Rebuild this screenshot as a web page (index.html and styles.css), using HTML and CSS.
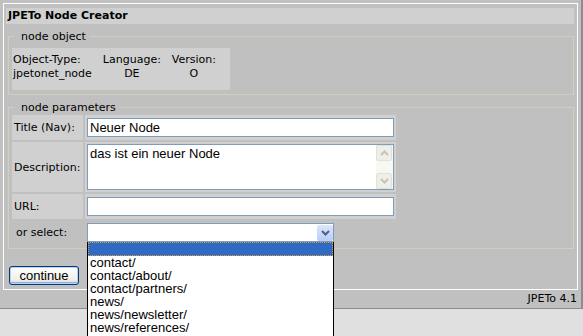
FILE: index.html
```html
<!DOCTYPE html>
<html lang="en">
<head>
    <meta charset="UTF-8">
    <title>JPETo Node Creator</title>
    <link rel="stylesheet" href="styles.css">
</head>
<body>

<div class="page">
    <div class="frame">
        <div class="titlebar">JPETo Node Creator</div>

        <fieldset class="group group-object">
            <legend>node object</legend>
            <div class="object-box">
                <table class="object-info">
                    <tr><td>Object-Type:</td><td class="center">Language:</td><td class="center">Version:</td></tr>
                    <tr><td>jpetonet_node</td><td class="center">DE</td><td class="center">O</td></tr>
                </table>
            </div>
        </fieldset>

        <fieldset class="group group-params">
            <legend>node parameters</legend>
            <div class="params">
                <div class="label">Title (Nav):</div>
                <div class="field"><input class="text" type="text" value="Neuer Node"></div>

                <div class="label">Description:</div>
                <div class="field field-area">
                    <div class="textbox">
                        <textarea>das ist ein neuer Node</textarea>
                        <div class="scrollbar">
                            <span class="sb-btn">
                                <svg width="9" height="6" viewBox="0 0 9 6"><path d="M1 5 L4.5 1.5 L8 5" fill="none" stroke="#c4c4bb" stroke-width="2"/></svg>
                            </span>
                            <span class="sb-btn">
                                <svg width="9" height="6" viewBox="0 0 9 6"><path d="M1 1 L4.5 4.5 L8 1" fill="none" stroke="#c4c4bb" stroke-width="2"/></svg>
                            </span>
                        </div>
                    </div>
                </div>

                <div class="label">URL:</div>
                <div class="field"><input class="text" type="text" value=""></div>

                <div class="label plain">or select:</div>
                <div class="field plain">
                    <div class="select">
                        <span class="select-value"></span>
                        <span class="select-arrow">
                            <svg width="9" height="6" viewBox="0 0 9 6"><path d="M1 1 L4.5 4.5 L8 1" fill="none" stroke="#4d6185" stroke-width="2"/></svg>
                        </span>
                        <ul class="dropdown">
                            <li class="selected"></li>
                            <li>contact/</li>
                            <li>contact/about/</li>
                            <li>contact/partners/</li>
                            <li>news/</li>
                            <li>news/newsletter/</li>
                            <li>news/references/</li>
                        </ul>
                    </div>
                </div>
            </div>
        </fieldset>

        <button class="continue" type="button">continue</button>
    </div>
    <div class="footer">JPETo 4.1</div>
</div>

</body>
</html>
```

FILE: styles.css
```css
html {
    background: #e0e0e0;
}
body {
    margin: 0;
    min-height: 336px;
    font-family: 'DejaVu Sans', Verdana, sans-serif;
    font-size: 11px;
    color: #000;
}
.page {
    background: #c0c0c0;
    border-right: 2px solid #8c8c8c;
    border-bottom: 1px solid #8c8c8c;
    padding: 3px 3px 0 3px;
}
.frame {
    border: 1px solid #fff;
    padding: 4px 3px 4px 2px;
}
.titlebar {
    background: #d0d0d0;
    height: 16px;
    line-height: 16px;
    padding-left: 2px;
    font-weight: bold;
}
.group {
    margin: 6px 0 0 2px;
    border: 1px solid #d0d0bf;
    padding: 1px 3px 4px 3px;
    min-width: 0;
}
.group legend {
    margin-left: 2px;
    padding: 0 4px 0 7px;
    line-height: 13px;
}
.group-object {
    padding-top: 5px;
}
.object-box {
    display: table;
    background: #d0d0d0;
    padding: 5px 9px 9px 0;
}
.object-info {
    border-collapse: collapse;
}
.object-info td {
    padding: 0 5px 0 6px;
    line-height: 14px;
    white-space: nowrap;
}
.object-info td:first-child {
    padding-left: 1px;
}
.center {
    text-align: center;
}
.params {
    display: grid;
    grid-template-columns: 71px 311px;
    gap: 2px;
}
.label {
    background: #d0d0d0;
    padding: 0 2px;
    display: flex;
    align-items: center;
}
.field {
    background: #d0d0d0;
    padding: 3px 2px;
}
.field-area {
    padding: 2px;
}
.plain {
    background: none;
}
.label.plain {
    padding-left: 4px;
}
.field.plain {
    padding: 2px;
}
.text {
    display: block;
    box-sizing: border-box;
    width: 307px;
    height: 19px;
    margin: 0;
    border: 1px solid #7f9db9;
    padding: 0 2px;
    background: #fff;
    font-family: 'Liberation Sans', Arial, sans-serif;
    font-size: 13px;
    color: #000;
    outline: none;
}
.textbox {
    display: flex;
    box-sizing: border-box;
    width: 307px;
    height: 46px;
    border: 1px solid #7f9db9;
    background: #fff;
}
.textbox textarea {
    flex: 1;
    margin: 0;
    border: 0;
    padding: 1px 2px;
    resize: none;
    overflow: hidden;
    outline: none;
    background: transparent;
    font-family: 'Liberation Sans', Arial, sans-serif;
    font-size: 13px;
    line-height: 15px;
    color: #000;
}
.scrollbar {
    width: 16px;
    padding-right: 1px;
    background: #f8f8f3;
    display: flex;
    flex-direction: column;
    justify-content: space-between;
}
.sb-btn {
    box-sizing: border-box;
    height: 16px;
    border: 1px solid #e2e1d6;
    border-radius: 2px;
    background: #efeee7;
    display: flex;
    align-items: center;
    justify-content: center;
}
.select {
    position: relative;
    display: flex;
    box-sizing: border-box;
    width: 247px;
    height: 19px;
    border: 1px solid #7f9db9;
    background: #fff;
}
.select-value {
    flex: 1;
}
.select-arrow {
    width: 16px;
    height: 16px;
    margin-top: 1px;
    border-radius: 2px;
    background: linear-gradient(#dce6fc, #b9cdf7);
    display: flex;
    align-items: center;
    justify-content: center;
}
.dropdown {
    position: absolute;
    z-index: 10;
    left: -1px;
    top: calc(100% + 1px);
    width: 247px;
    height: 94px;
    overflow: hidden;
    box-sizing: border-box;
    margin: 0;
    padding: 0;
    list-style: none;
    background: #fff;
    border: 1px solid #000;
    border-top: 0;
    border-bottom: 0;
    font-family: 'Liberation Sans', Arial, sans-serif;
    font-size: 13px;
    line-height: 13px;
}
.dropdown li {
    padding-left: 2px;
    height: 13px;
    white-space: nowrap;
}
.dropdown li.selected {
    box-sizing: border-box;
    height: 14px;
    background: #316ac5;
    border: 1px dotted #e59b34;
}
.continue {
    display: block;
    margin: 17px 0 0 3px;
    width: 70px;
    height: 19px;
    padding: 0;
    border: 1px solid #003c74;
    border-radius: 3px;
    background: linear-gradient(#fefefe, #f2f1ec 70%, #dcd8cc);
    box-shadow: inset 0 0 0 1px #bcd0f4, inset 0 -1px 0 1px #8eaee8;
    font-family: 'Liberation Sans', Arial, sans-serif;
    font-size: 13px;
    color: #000;
}
.footer {
    height: 18px;
    line-height: 18px;
    text-align: right;
    padding-right: 1px;
}
```
